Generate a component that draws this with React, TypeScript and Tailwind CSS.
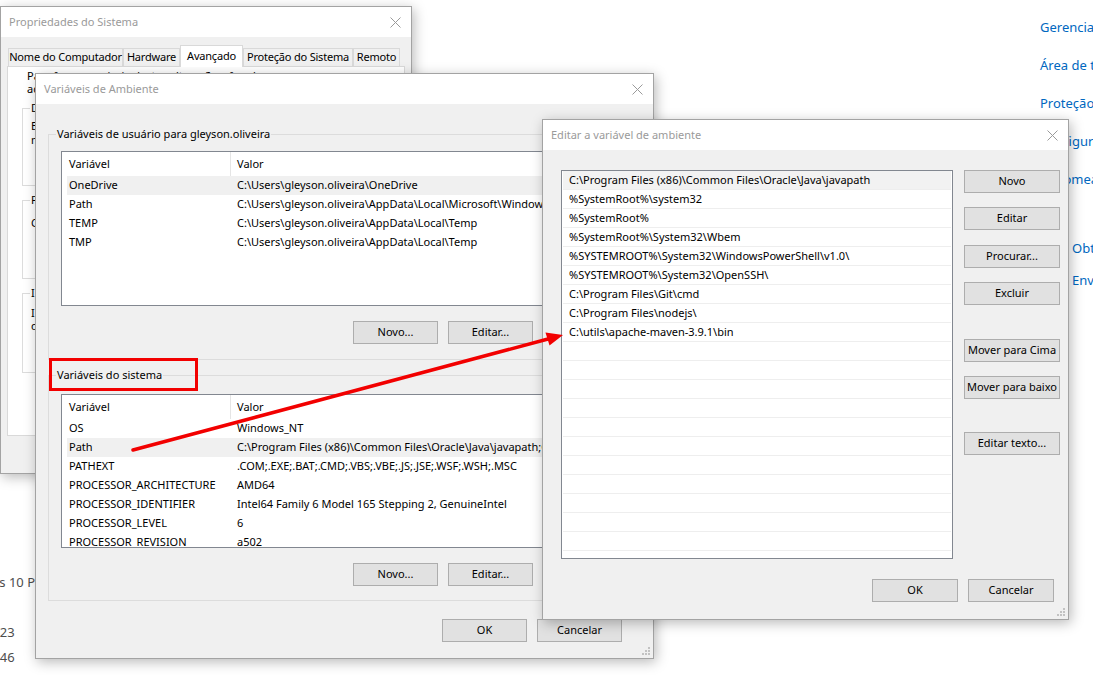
import type { ReactNode } from "react";

type Pair = [string, string];

const userVars: Pair[] = [
  ["OneDrive", "C:\\Users\\gleyson.oliveira\\OneDrive"],
  ["Path", "C:\\Users\\gleyson.oliveira\\AppData\\Local\\Microsoft\\WindowsApps;"],
  ["TEMP", "C:\\Users\\gleyson.oliveira\\AppData\\Local\\Temp"],
  ["TMP", "C:\\Users\\gleyson.oliveira\\AppData\\Local\\Temp"],
];

const systemVars: Pair[] = [
  ["OS", "Windows_NT"],
  ["Path", "C:\\Program Files (x86)\\Common Files\\Oracle\\Java\\javapath;C:\\Windows\\system32"],
  ["PATHEXT", ".COM;.EXE;.BAT;.CMD;.VBS;.VBE;.JS;.JSE;.WSF;.WSH;.MSC"],
  ["PROCESSOR_ARCHITECTURE", "AMD64"],
  ["PROCESSOR_IDENTIFIER", "Intel64 Family 6 Model 165 Stepping 2, GenuineIntel"],
  ["PROCESSOR_LEVEL", "6"],
  ["PROCESSOR_REVISION", "a502"],
];

const pathEntries = [
  "C:\\Program Files (x86)\\Common Files\\Oracle\\Java\\javapath",
  "%SystemRoot%\\system32",
  "%SystemRoot%",
  "%SystemRoot%\\System32\\Wbem",
  "%SYSTEMROOT%\\System32\\WindowsPowerShell\\v1.0\\",
  "%SYSTEMROOT%\\System32\\OpenSSH\\",
  "C:\\Program Files\\Git\\cmd",
  "C:\\Program Files\\nodejs\\",
  "C:\\utils\\apache-maven-3.9.1\\bin",
];

function CloseX() {
  return (
    <svg width="11" height="11" viewBox="0 0 11 11" className="shrink-0">
      <path d="M0.5 0.5 L10.5 10.5 M10.5 0.5 L0.5 10.5" stroke="#9a9a9a" strokeWidth="1" fill="none" />
    </svg>
  );
}

function Grip() {
  return (
    <svg width="11" height="11" viewBox="0 0 11 11" className="absolute bottom-[2px] right-[2px]">
      {[
        [8, 2],
        [8, 5],
        [5, 5],
        [8, 8],
        [5, 8],
        [2, 8],
      ].map(([x, y], i) => (
        <rect key={i} x={x} y={y} width="2" height="2" fill="#c2c2c2" />
      ))}
    </svg>
  );
}

function Btn({ children, className = "" }: { children: ReactNode; className?: string }) {
  return (
    <div
      className={`flex h-[23px] shrink-0 items-center justify-center whitespace-nowrap border border-[#adadad] bg-[#e1e1e1] text-[11px] text-black ${className}`}
    >
      {children}
    </div>
  );
}

function Win({
  title,
  className,
  children,
}: {
  title: string;
  className: string;
  children: ReactNode;
}) {
  return (
    <div
      className={`absolute flex flex-col overflow-hidden border border-[#a3a3a3] bg-[#f0f0f0] shadow-[2px_3px_12px_rgba(0,0,0,0.28)] ${className}`}
    >
      <div className="flex h-[30px] shrink-0 items-center justify-between bg-white pl-[8px] pr-[10px]">
        <span className="text-[11px] text-[#9a9a9a]">{title}</span>
        <CloseX />
      </div>
      {children}
    </div>
  );
}

function Group({
  label,
  className,
  labelBg = "bg-[#f0f0f0]",
  children,
}: {
  label: string;
  className: string;
  labelBg?: string;
  children?: ReactNode;
}) {
  return (
    <div className={`relative shrink-0 border border-[#dcdcdc] ${className}`}>
      <span className={`absolute left-[7px] top-[-9px] whitespace-nowrap px-px leading-[16px] ${labelBg}`}>{label}</span>
      {children}
    </div>
  );
}

function VarList({ rows, highlight, className }: { rows: Pair[]; highlight: number; className: string }) {
  return (
    <div className={`overflow-hidden border border-[#828790] bg-white ${className}`}>
      <div className="flex h-[24px] items-center">
        <div className="flex h-full w-[169px] shrink-0 items-center border-r border-[#e5e5e5] pl-[7px]">Variável</div>
        <div className="pl-[6px]">Valor</div>
      </div>
      {rows.map(([name, value], i) => (
        <div
          key={name}
          className={`ml-[5px] flex h-[19px] items-center whitespace-nowrap ${i === highlight ? "bg-[#f0f0f0]" : ""}`}
        >
          <span className="w-[168px] shrink-0 pl-[2px]">{name}</span>
          <span className="pl-[2px]">{value}</span>
        </div>
      ))}
    </div>
  );
}

export default function App() {
  const tabs = [
    { label: "Nome do Computador", w: "w-[115px]" },
    { label: "Hardware", w: "w-[57px]" },
    { label: "Avançado", w: "w-[63px]", active: true },
    { label: "Proteção do Sistema", w: "w-[110px]" },
    { label: "Remoto", w: "w-[47px]" },
  ];

  return (
    <div className="relative h-[675px] w-[1093px] overflow-hidden bg-white font-['Noto_Sans',sans-serif] text-[11px] text-black">
      {/* settings page behind the dialogs */}
      <div className="absolute left-[1040px] top-[17px] flex flex-col gap-[18px] whitespace-nowrap text-[13px] text-[#0067c0]">
        <span className="h-[20px] leading-[20px]">Gerenciador de Dispositivos</span>
        <span className="h-[20px] leading-[20px]">Área de trabalho remota</span>
        <span className="h-[20px] leading-[20px]">Proteção do sistema</span>
        <span className="h-[20px] leading-[20px]">Configurações avançadas do sistema</span>
        <span className="h-[20px] leading-[20px]">Renomear este PC (avançado)</span>
      </div>
      <div className="absolute left-[1072px] top-[238px] flex flex-col gap-[12px] whitespace-nowrap text-[13px] text-[#0067c0]">
        <span className="h-[20px] leading-[20px]">Obter ajuda</span>
        <span className="h-[20px] leading-[20px]">Enviar comentários</span>
      </div>
      <div className="absolute left-0 top-[572px] flex flex-col items-start whitespace-nowrap text-[13px] text-[#4d4d4d]">
        <span className="ml-[-50px] h-[20px] leading-[20px]">Windows 10 Pro</span>
        <span className="ml-[-15px] mt-[30px] h-[20px] leading-[20px]">2023</span>
        <span className="ml-[-15px] mt-[5px] h-[20px] leading-[20px]">2846</span>
      </div>

      {/* Propriedades do Sistema */}
      <Win title="Propriedades do Sistema" className="left-0 top-[6px] h-[468px] w-[412px]">
        <div className="flex flex-col px-[6px] pt-[8px]">
          <div className="ml-[1px] flex items-end">
            {tabs.map((t) => (
              <div
                key={t.label}
                className={`flex shrink-0 items-center justify-center whitespace-nowrap border border-b-0 border-[#d9d9d9] tracking-[-0.2px] ${t.w} ${
                  t.active ? "relative z-10 -mb-px h-[22px] bg-white" : "h-[18px] bg-[#f0f0f0]"
                }`}
              >
                {t.label}
              </div>
            ))}
          </div>
          <div className="flex h-[370px] flex-col border border-[#d9d9d9] bg-white pl-[14px] pr-[14px]">
            <div className="pl-[5px] pt-[2px] leading-[13px]">
              Para fazer a maioria destas alterações, faça logon como
              <br />
              administrador.
            </div>
            <Group label="Desempenho" labelBg="bg-white" className="mt-[13px] h-[78px] pl-[8px] pt-[10px] leading-[14px]">
              Efeitos visuais, agendamento do processador, uso de memória e
              <br />
              memória virtual
            </Group>
            <Group label="Perfis de Usuário" labelBg="bg-white" className="mt-[14px] h-[79px] pl-[8px] pt-[15px] leading-[14px]">
              Configurações da área de trabalho relacionadas à sua entrada
            </Group>
            <Group label="Inicialização e Recuperação" labelBg="bg-white" className="mt-[14px] h-[80px] pl-[8px] pt-[12px] leading-[13px]">
              Inicialização do sistema, falha do sistema e informações de
              <br />
              depuração
            </Group>
          </div>
        </div>
      </Win>

      {/* Variáveis de Ambiente */}
      <Win title="Variáveis de Ambiente" className="left-[35px] top-[73px] h-[586px] w-[619px]">
        <Group
          label="Variáveis de usuário para gleyson.oliveira"
          className="ml-[12px] mt-[30px] h-[226px] w-[593px] px-[12px] pt-[16px]"
        >
          <VarList rows={userVars} highlight={0} className="h-[155px]" />
          <div className="mt-[15px] flex justify-end gap-[10px]">
            <Btn className="w-[85px]">Novo...</Btn>
            <Btn className="w-[85px]">Editar...</Btn>
            <Btn className="w-[85px]">Excluir</Btn>
          </div>
        </Group>
        <Group label="Variáveis do sistema" className="ml-[12px] mt-[15px] h-[226px] w-[593px] px-[12px] pt-[18px]">
          <VarList rows={systemVars} highlight={1} className="h-[154px]" />
          <div className="mt-[15px] flex justify-end gap-[10px]">
            <Btn className="w-[85px]">Novo...</Btn>
            <Btn className="w-[85px]">Editar...</Btn>
            <Btn className="w-[85px]">Excluir</Btn>
          </div>
        </Group>
        <div className="mt-[18px] flex justify-end gap-[10px] pr-[31px]">
          <Btn className="w-[85px]">OK</Btn>
          <Btn className="w-[85px]">Cancelar</Btn>
        </div>
        <Grip />
      </Win>

      {/* Editar a variável de ambiente */}
      <Win title="Editar a variável de ambiente" className="left-[542px] top-[119px] h-[501px] w-[527px]">
        <div className="flex pl-[18px] pt-[20px]">
          <div className="h-[389px] w-[392px] shrink-0 overflow-hidden border border-[#828790] bg-white">
            {Array.from({ length: 21 }).map((_, i) => (
              <div
                key={i}
                className={`mx-px flex h-[19px] items-center whitespace-nowrap border-b border-[#eeeeee] pl-[6px] ${
                  i === 0 ? "bg-[#f2f2f2]" : ""
                }`}
              >
                {pathEntries[i] ?? ""}
              </div>
            ))}
          </div>
          <div className="ml-[11px] flex w-[96px] flex-col">
            <Btn>Novo</Btn>
            <Btn className="mt-[14px]">Editar</Btn>
            <Btn className="mt-[15px]">Procurar...</Btn>
            <Btn className="mt-[14px]">Excluir</Btn>
            <Btn className="mt-[34px]">Mover para Cima</Btn>
            <Btn className="mt-[14px]">Mover para baixo</Btn>
            <Btn className="mt-[33px]">Editar texto...</Btn>
          </div>
        </div>
        <div className="mt-[20px] flex justify-end gap-[10px] pr-[14px]">
          <Btn className="w-[86px]">OK</Btn>
          <Btn className="w-[86px]">Cancelar</Btn>
        </div>
        <Grip />
      </Win>

      {/* annotation */}
      <div className="pointer-events-none absolute left-[49px] top-[358px] h-[33px] w-[149px] border-[3px] border-[#f20000]" />
      <svg className="pointer-events-none absolute left-0 top-0" width="1093" height="675" viewBox="0 0 1093 675">
        <line x1="133" y1="450" x2="548" y2="339" stroke="#f20000" strokeWidth="3.5" strokeLinecap="round" />
        <polygon points="563,335 549.5,345.5 545.5,332.5" fill="#f20000" />
      </svg>
    </div>
  );
}
